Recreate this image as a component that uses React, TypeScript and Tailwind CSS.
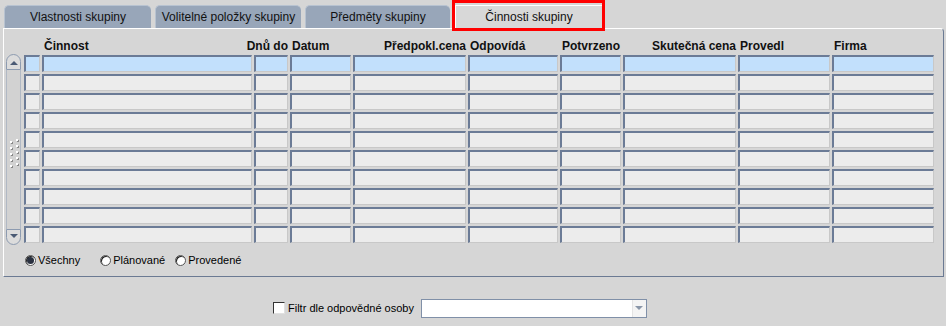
import React from "react";

const cols = [
  { w: 16, label: "", align: "left" },
  { w: 210, label: "Činnost", align: "left" },
  { w: 34, label: "Dnů do", align: "right" },
  { w: 61, label: "Datum", align: "left" },
  { w: 113, label: "Předpokl.cena", align: "right" },
  { w: 90, label: "Odpovídá", align: "left" },
  { w: 61, label: "Potvrzeno", align: "left" },
  { w: 113, label: "Skutečná cena", align: "right" },
  { w: 92, label: "Provedl", align: "left" },
  { w: 102, label: "Firma", align: "left" },
];

function Tab({ label, w }: { label: string; w: number }) {
  return (
    <div
      className="h-[23px] rounded-t-[5px] bg-[#98a6b9] border-t border-l border-[#b8c3d1] flex items-center justify-center text-[12px] text-[#111]"
      style={{ width: w }}
    >
      {label}
    </div>
  );
}

function Radio({ checked, label }: { checked?: boolean; label: string }) {
  return (
    <div className="flex items-center gap-[2px]">
      <div className="w-[11px] h-[11px] rounded-full border border-[#555] bg-white flex items-center justify-center shadow-[inset_1px_1px_0_#222]">
        {checked && <div className="w-[7px] h-[7px] rounded-full bg-[#2a3140]" />}
      </div>
      <span className="text-[11px] text-black">{label}</span>
    </div>
  );
}

export default function App() {
  return (
    <div
      className="w-[946px] h-[326px] bg-[#d6d6d6] overflow-hidden"
      style={{ fontFamily: '"Liberation Sans", Arial, sans-serif' }}
    >
      {/* tabs */}
      <div className="flex items-end h-[28px] pl-[4px]">
        <Tab label="Vlastnosti skupiny" w={147} />
        <div className="w-[4px]" />
        <Tab label="Volitelné položky skupiny" w={146} />
        <div className="w-[4px]" />
        <Tab label="Předměty skupiny" w={145} />
        <div className="w-[2px]" />
        <div className="relative z-10 self-start w-[153px] h-[31px] border-[3px] border-[#ff0000] mb-[-3px] flex">
          <div className="flex-1 mt-[2px] bg-[#d8d8d8] border-t border-l border-white flex items-center justify-center text-[12px] text-[#111]">
            Činnosti skupiny
          </div>
        </div>
      </div>

      {/* panel */}
      <div className="ml-[3px] w-[941px] h-[249px] border-t border-l border-white border-r border-b border-r-[#6b7a93] border-b-[#6b7a93] rounded-tr-[4px] flex flex-col">
        {/* header */}
        <div className="flex gap-[2px] pl-[20px] pt-[8px] h-[26px]">
          {cols.map((c, i) => (
            <div
              key={i}
              className={`flex text-[12px] font-bold text-[#111] whitespace-nowrap ${c.align === "right" ? "justify-end" : "justify-start pl-[2px]"}`}
              style={{ width: c.w }}
            >
              <span className="shrink-0">{c.label}</span>
            </div>
          ))}
        </div>
        <div className="flex">
          {/* scrollbar */}
          <div className="ml-[2px] mt-[-1px] w-[15px] h-[191px] flex flex-col">
            <div className="h-[16px] border border-[#8d9bb0] rounded-t-full bg-[#dcdcdc] flex items-center justify-center">
              <div className="w-0 h-0 border-l-[4px] border-r-[4px] border-b-[4px] border-l-transparent border-r-transparent border-b-[#4a5a74] mt-[2px]" />
            </div>
            <div className="flex-1 border-l border-r border-[#b0b8c4] bg-[#d2d2d2] flex flex-col items-center justify-center gap-[4px] pt-[8px]">
              {[0, 1, 2, 3, 4].map((k) => (
                <div key={k} className="flex gap-[4px]">
                  <div className="w-[2px] h-[2px] bg-white shadow-[1px_1px_0_#888]" />
                  <div className="w-[2px] h-[2px] bg-white shadow-[1px_1px_0_#888] mt-[-2px]" />
                </div>
              ))}
            </div>
            <div className="h-[16px] border border-[#8d9bb0] rounded-b-full bg-[#dcdcdc] flex items-center justify-center">
              <div className="w-0 h-0 border-l-[4px] border-r-[4px] border-t-[4px] border-l-transparent border-r-transparent border-t-[#4a5a74] mb-[2px]" />
            </div>
          </div>
          {/* rows */}
          <div className="ml-[3px] flex flex-col gap-[2px]">
            {Array.from({ length: 10 }).map((_, r) => (
              <div key={r} className="flex gap-[2px]">
                {cols.map((c, i) => (
                  <div
                    key={i}
                    className={`h-[17px] border-t-2 border-l-2 border-r border-b border-t-[#6b7b96] border-l-[#6b7b96] border-r-[#c8c8c8] border-b-[#c8c8c8] ${r === 0 ? "bg-[#c2e0fc]" : "bg-[#ececec]"}`}
                    style={{ width: c.w }}
                  />
                ))}
              </div>
            ))}
          </div>
        </div>
        {/* radios */}
        <div className="flex items-center pl-[21px] pt-[8px] h-[22px]">
          <Radio checked label="Všechny" />
          <div className="w-[20px]" />
          <Radio label="Plánované" />
          <div className="w-[10px]" />
          <Radio label="Provedené" />
        </div>
      </div>

      {/* bottom filter */}
      <div className="flex items-center h-[40px] pl-[273px] pt-[22px]">
        <div className="w-[12px] h-[12px] bg-white border border-[#333] border-r-[#e0e0e0] border-b-[#e0e0e0]" />
        <span className="ml-[3px] text-[11px] text-black">Filtr dle odpovědné osoby</span>
        <div className="ml-[7px] w-[226px] h-[19px] bg-white border border-[#8090a8] flex justify-end items-center">
          <div className="w-[14px] h-full flex items-center justify-center border-l border-[#e4e4e4] bg-[#f4f4f4]">
            <div className="w-0 h-0 border-l-[4px] border-r-[4px] border-t-[4px] border-l-transparent border-r-transparent border-t-[#8a96a8]" />
          </div>
        </div>
      </div>
    </div>
  );
}
